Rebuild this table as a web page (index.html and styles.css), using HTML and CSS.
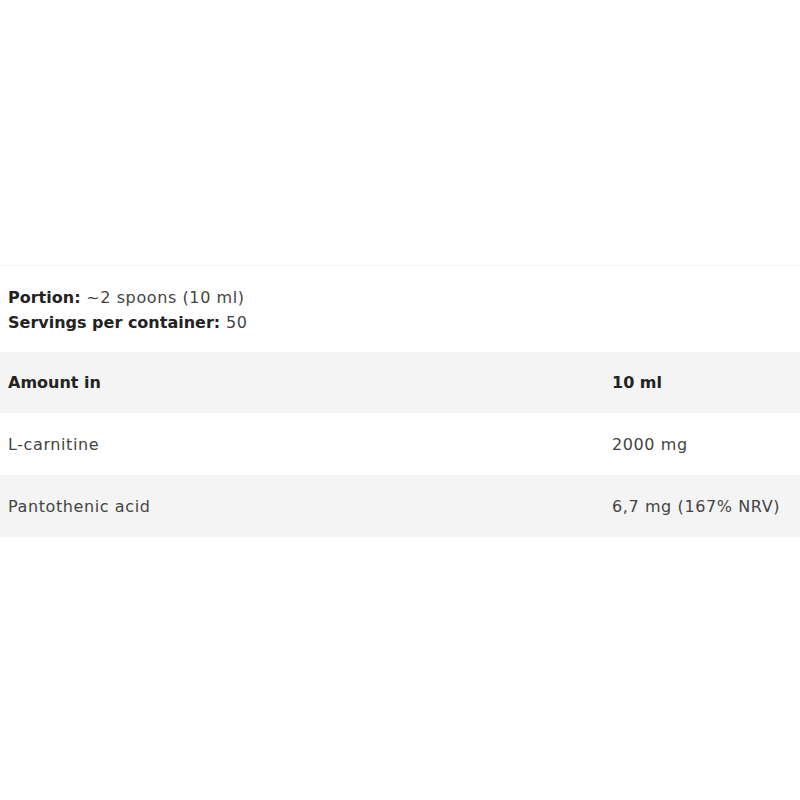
FILE: index.html
```html
<!DOCTYPE html>
<html>
<head>
<meta charset="utf-8">
<link rel="stylesheet" href="styles.css">
</head>
<body>
<div class="page">
  <div class="top"></div>
  <section class="facts">
    <div class="info">
      <p><b>Portion:</b> ~2 spoons (10 ml)</p>
      <p><b>Servings per container:</b> 50</p>
    </div>
    <div class="table">
      <div class="row head"><span>Amount in</span><span>10 ml</span></div>
      <div class="row"><span>L-carnitine</span><span>2000 mg</span></div>
      <div class="row alt"><span>Pantothenic acid</span><span>6,7 mg (167% NRV)</span></div>
    </div>
  </section>
</div>
</body>
</html>
```
FILE: styles.css
```css
html, body {
  margin: 0;
  padding: 0;
  background: #fff;
}
.page {
  width: 800px;
  height: 800px;
  font-family: "DejaVu Sans", "Open Sans", sans-serif;
  font-size: 16px;
  color: #444;
  letter-spacing: 0.6px;
}
.top {
  height: 265px;
}
.facts {
  border-top: 1px solid #f4f4f4;
}
.info {
  padding: 19px 8px 0 8px;
  height: 67px;
}
.info p {
  margin: 0;
  line-height: 25px;
}
.info b {
  font-weight: 700;
  color: #222;
  letter-spacing: 0;
}
.table {
  display: flex;
  flex-direction: column;
}
.row {
  display: grid;
  grid-template-columns: 604px 1fr;
  align-items: center;
  height: 62px;
  padding-left: 8px;
}
.row.head {
  background: #f4f4f4;
  font-weight: 700;
  color: #222;
  height: 61px;
  letter-spacing: 0;
}
.row.alt {
  background: #f4f4f4;
}
```
